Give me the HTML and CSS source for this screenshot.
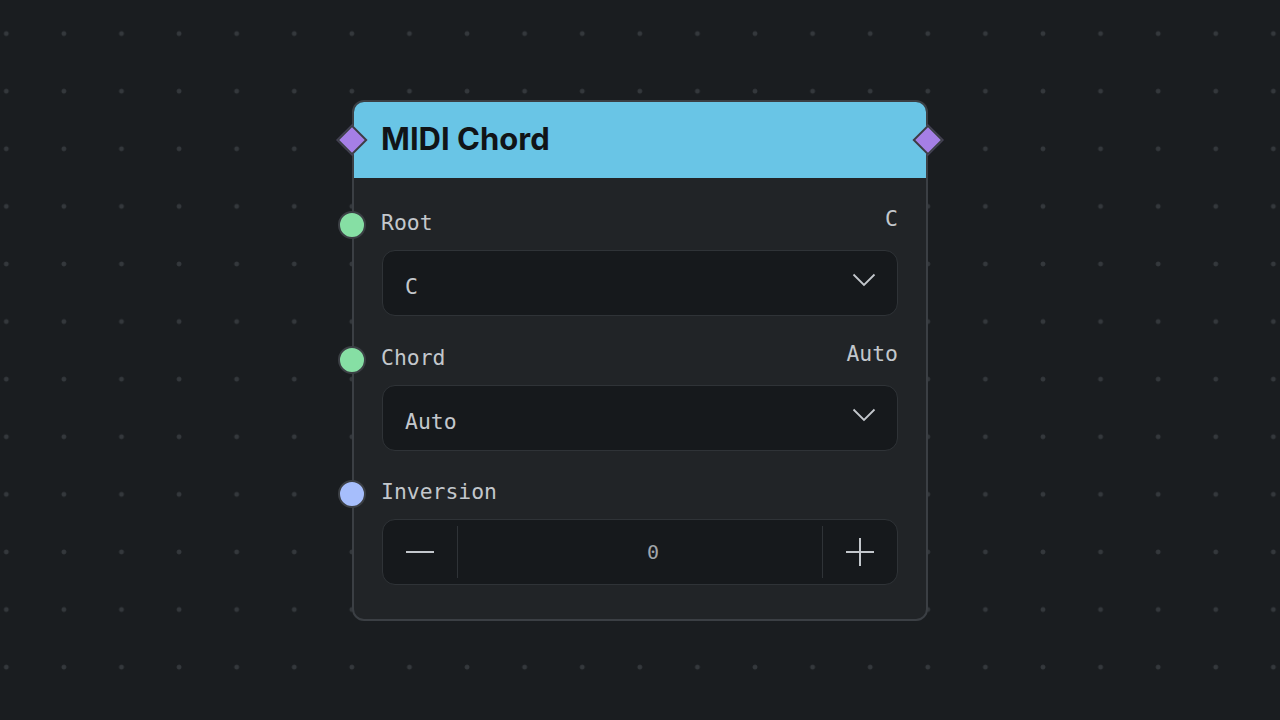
FILE: index.html
```html
<!DOCTYPE html>
<html lang="en">
<head>
    <meta charset="UTF-8">
    <meta name="viewport" content="width=device-width, initial-scale=1.0">
    <title>MIDI Chord</title>
    <link rel="stylesheet" href="styles.css">
</head>
<body>
    <div class="canvas">
        <div class="node">
            <div class="node-header">
                <span class="port port-in"></span>
                <h1>MIDI Chord</h1>
                <span class="port port-out"></span>
            </div>
            <div class="node-body">
                <div class="field">
                    <span class="socket socket-note"></span>
                    <div class="field-head">
                        <label>Root</label>
                        <span class="field-value">C</span>
                    </div>
                    <div class="select">
                        <span>C</span>
                        <svg width="24" height="14" viewBox="0 0 24 14"><path d="M1.5 1.5 L12 12 L22.5 1.5" fill="none" stroke="#c3c7cc" stroke-width="1.8"/></svg>
                    </div>
                </div>
                <div class="field">
                    <span class="socket socket-note"></span>
                    <div class="field-head">
                        <label>Chord</label>
                        <span class="field-value">Auto</span>
                    </div>
                    <div class="select">
                        <span>Auto</span>
                        <svg width="24" height="14" viewBox="0 0 24 14"><path d="M1.5 1.5 L12 12 L22.5 1.5" fill="none" stroke="#c3c7cc" stroke-width="1.8"/></svg>
                    </div>
                </div>
                <div class="field">
                    <span class="socket socket-int"></span>
                    <div class="field-head">
                        <label>Inversion</label>
                    </div>
                    <div class="stepper">
                        <button class="step">
                            <svg width="30" height="30" viewBox="0 0 30 30"><path d="M1 15 H29" stroke="#c3c7cc" stroke-width="2"/></svg>
                        </button>
                        <span class="step-value">0</span>
                        <button class="step">
                            <svg width="30" height="30" viewBox="0 0 30 30"><path d="M1 15 H29 M15 1 V29" stroke="#c3c7cc" stroke-width="2"/></svg>
                        </button>
                    </div>
                </div>
            </div>
        </div>
    </div>
</body>
</html>
```

FILE: styles.css
```css
/* Canvas with dotted grid */
body {
    margin: 0;
    padding: 0;
    background-color: #1a1d20;
    background-image: radial-gradient(circle, #34383c 0, #34383c 2px, transparent 2.8px);
    background-size: 57.6px 57.6px;
    background-position: -22.5px 4.8px;
    height: 100vh;
    overflow: hidden;
    font-family: "DejaVu Sans Mono", monospace;
}

.canvas {
    display: flex;
    justify-content: center;
    padding-top: 100px;
}

.node {
    width: 572px;
    background: #212427;
    border: 2px solid #3b3f44;
    border-radius: 12px;
}

.node-header {
    position: relative;
    height: 76px;
    background: #69c5e6;
    border-radius: 10px 10px 0 0;
    display: flex;
    align-items: center;
    padding-left: 27px;
    box-sizing: border-box;
    padding-bottom: 3px;
}

.node-header h1 {
    margin: 0;
    font-family: Inter, "Liberation Sans", sans-serif;
    font-size: 31px;
    font-weight: 700;
    letter-spacing: 0;
    color: #111417;
}

/* Diamond ports on the header edges */
.port {
    position: absolute;
    top: 27px;
    width: 18px;
    height: 18px;
    background: #a57fe6;
    border: 2px solid #3b3f44;
    transform: rotate(45deg);
}

.port-in {
    left: -13px;
}

.port-out {
    right: -13px;
}

.node-body {
    padding: 30px 28px 34px 28px;
    display: flex;
    flex-direction: column;
    gap: 27px;
}

.field {
    position: relative;
}

.field:nth-child(3) {
    margin-top: -1px;
}

/* Round input sockets on the left edge */
.socket {
    position: absolute;
    left: -44px;
    top: 3px;
    width: 24px;
    height: 24px;
    border-radius: 50%;
    border: 2px solid #3b3f44;
}

.socket-note {
    background: #86dfa4;
}

.socket-int {
    background: #a6befc;
}

.field-head {
    display: flex;
    justify-content: space-between;
    align-items: center;
    height: 28px;
    margin-bottom: 14px;
}

.field-head label {
    font-size: 21.4px;
    color: #c3c7cc;
    margin-left: -1px;
}

.field-value {
    font-size: 21.4px;
    color: #c3c7cc;
    margin-bottom: 8px;
}

.select {
    height: 64px;
    background: #16191c;
    border: 1px solid #2f3337;
    border-radius: 13px;
    display: flex;
    align-items: center;
    justify-content: space-between;
    padding: 0 21px 0 22px;
    font-size: 21.4px;
    color: #c3c7cc;
}

.select span {
    padding-top: 6px;
}

.select svg {
    margin-top: -6px;
}

.stepper {
    height: 64px;
    background: #16191c;
    border: 1px solid #2f3337;
    border-radius: 13px;
    display: flex;
    align-items: center;
}

.step {
    width: 75px;
    height: 100%;
    background: none;
    border: none;
    padding: 0;
    display: flex;
    align-items: center;
    justify-content: center;
}

.step:first-child {
    border-right: 1px solid #2f3337;
    height: 52px;
}

.step:last-child {
    border-left: 1px solid #2f3337;
    height: 52px;
}

.step-value {
    flex: 1;
    text-align: center;
    padding-left: 26px;
    font-size: 20px;
    color: #a0a5ab;
}
```
